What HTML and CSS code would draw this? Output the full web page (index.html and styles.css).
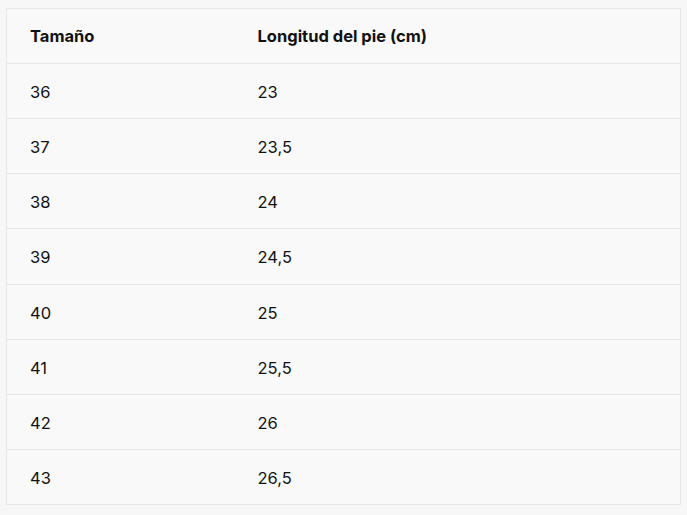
FILE: index.html
```html
<!DOCTYPE html>
<html lang="es">
<head>
<meta charset="utf-8">
<link rel="stylesheet" href="styles.css">
</head>
<body>
<table class="size-table">
  <thead>
    <tr><th class="col-size">Tamaño</th><th>Longitud del pie (cm)</th></tr>
  </thead>
  <tbody>
    <tr><td class="col-size">36</td><td>23</td></tr>
    <tr><td class="col-size">37</td><td>23,5</td></tr>
    <tr><td class="col-size">38</td><td>24</td></tr>
    <tr><td class="col-size">39</td><td>24,5</td></tr>
    <tr><td class="col-size">40</td><td>25</td></tr>
    <tr><td class="col-size">41</td><td>25,5</td></tr>
    <tr><td class="col-size">42</td><td>26</td></tr>
    <tr><td class="col-size">43</td><td>26,5</td></tr>
  </tbody>
</table>
</body>
</html>
```
FILE: styles.css
```css
html, body {
  background: #f7f7f7;
}
body {
  margin: 8px 6px;
  font-family: Inter, "Noto Sans", sans-serif;
  color: #111;
}
.size-table {
  width: 675px;
  border-collapse: collapse;
  border: 1px solid #e6e6e6;
  background: #f9f9f9;
  font-size: 16.5px;
}
.size-table th,
.size-table td {
  height: 55px;
  padding: 0 23px;
  box-sizing: border-box;
  text-align: left;
  vertical-align: middle;
  border-bottom: 1px solid #e6e6e6;
  line-height: 20px;
}
.size-table th {
  font-weight: 700;
  padding-bottom: 1px;
}
.size-table td {
  height: 55.15px;
  font-weight: 400;
  padding-top: 2px;
}
.col-size {
  width: 228px;
}
```
